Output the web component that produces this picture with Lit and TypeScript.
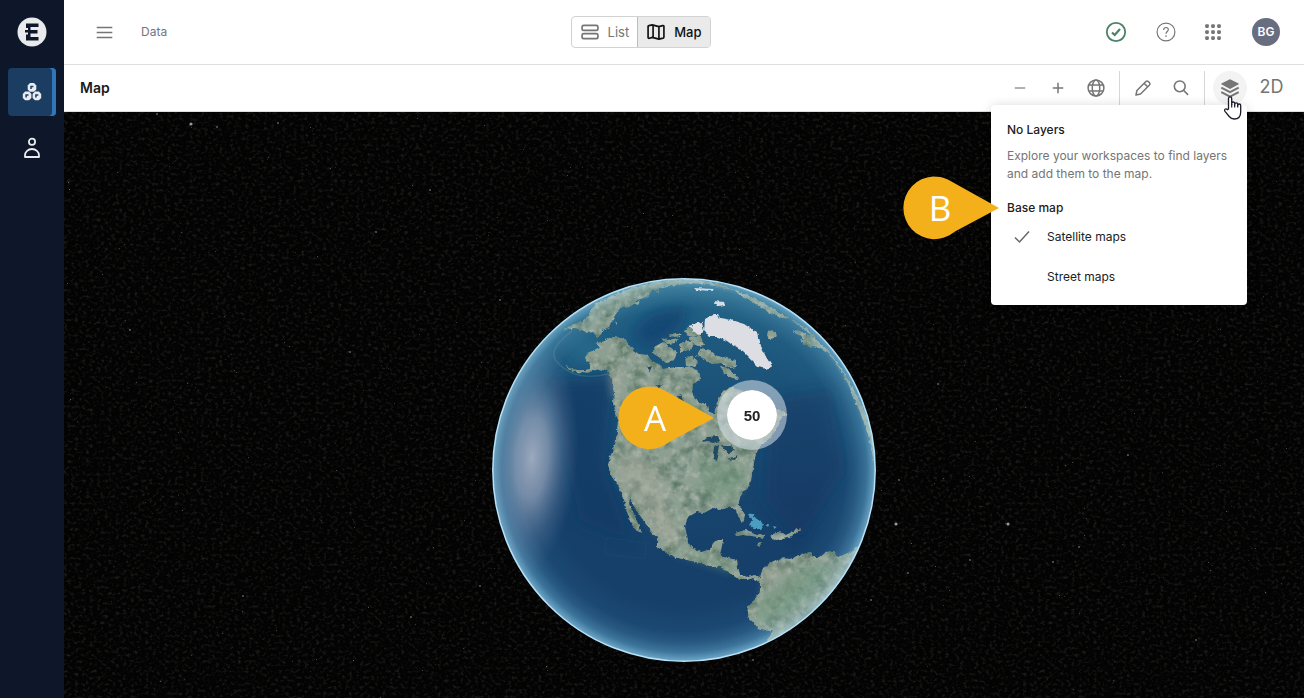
import { LitElement, html, svg, css } from "lit";
import { customElement, state } from "lit/decorators.js";

const LAND = [
  // Siberia, following the northern limb
  "M594 305Q638 279 690 279L690 283L677 285L666 286L653 290L648 296L637 300L630 307L620 308L612 320L609 327L603 330L598 338L593 332L587 333L582 330L574 328L565 330L570 325L583 322L590 313Z",
  // Kamchatka to Europe along the rim
  "M690 279Q730 284 765 304Q800 323 828 350L848 378L864 410Q876 440 874 462L868 435L860 412L850 388L843 374L834 360L828 352L818 347L808 345L803 337L795 333L792 330L800 331L806 335L814 336L806 328L790 319L782 318L768 312L757 304L742 297L734 290L710 285L690 283Z",
  // North and Central America
  "M587 353L592 351L600 347L597 343L605 341L609 338L613 337L625 338L628 344L633 350L639 354L647 355L652 361L657 363L663 369L677 367L690 367L697 370L702 377L697 382L693 385L692 393L695 399L700 402L708 405L710 413L714 414L717 403L722 392L730 387L737 389L747 393L756 397L767 407L780 410L788 415L780 419L780 423L770 438L760 446L757 452L754 462L753 470L752 474L750 485L744 491L740 497L738 505L742 509L745 515L743 523L738 516L737 510L730 507L720 510L713 508L704 513L697 512L690 516L687 520L685 527L687 535L688 542L692 548L700 552L710 550L712 543L718 540L723 540L722 546L720 555L728 558L737 560L738 568L740 574L747 577L755 575L760 577L760 582L752 578L747 580L740 580L732 575L726 570L720 567L710 566L700 563L687 560L677 558L668 554L657 547L657 538L650 530L643 520L637 511L630 498L629 504L634 514L642 533L635 529L630 520L627 512L624 500L618 485L612 477L608 465L610 457L615 445L617 432L618 420L613 403L614 392L612 380L609 372L600 369L587 373L580 371L590 369L590 365L585 358Z",
  // South America, cut by the eastern limb
  "M760 577L763 568L772 562L780 558L790 559L797 556L810 552L813 557L820 557L826 552L833 551L838 557L850 552L861 545Q848 578 829 599Q800 632 757 649L768 640L773 630L765 631L758 628L753 622L747 617L748 607L754 601L760 590Z",
  // Arctic islands
  "M656 346L663 342L670 347L677 352L674 361L666 363L660 358L653 353ZM661 338L668 340L678 338L676 343L666 344ZM679 344L687 340L694 345L689 351L681 352ZM684 331L692 326L700 328L700 336L692 337L686 335ZM690 337L701 337L704 345L698 346L691 343ZM701 348L710 350L717 356L727 358L736 361L736 367L730 368L721 363L712 364L703 358L696 356ZM685 357L693 356L698 363L694 367L686 365ZM720 366L727 368L735 375L739 379L732 378L724 372ZM669 335L676 333L681 336L674 337Z",
  // Iceland, British Isles, Caribbean islands, Aleutians
  "M768 331L774 330L777 334L776 338L769 339L767 335ZM800 339L806 340L812 347L804 345ZM735 533L746 530L757 534L766 535L763 538L752 536L743 535L736 536ZM770 536L777 532L788 534L797 529L798 531L788 538L776 540ZM794 532L801 529L796 534ZM757 544L763 543L760 546Z",
  "M655 291L660 290L658 293ZM566 366Q574 371 586 370L586 372Q574 374 566 367ZM634 303L640 301L638 305ZM615 323L617 322L617 325Z",
];

const ICE = [
  "M705 319L714 314L718 314L720 318L731 320L744 324L750 328L758 333L761 346L766 357L772 366L766 369L758 367L750 359L742 351L735 347L727 341L718 337L709 337L704 331Z",
  "M714 301L724 302L725 305L718 306ZM694 288L714 289L712 291L696 290ZM693 324L702 322L704 330L698 336L692 330ZM688 326L692 325L693 330Z",
];

const LAKES =
  "M701 443L708 437L718 436L720 441L713 443L708 442ZM714 446L719 444L718 452L716 461L713 458ZM722 446L730 446L735 450L728 454ZM727 459L738 455L735 460ZM646 368L652 366L650 371ZM655 386L662 384L659 387ZM677 396L681 394L684 402L680 403Z";

const GREEN =
  "M754 612L765 592L785 580L805 566L835 562L812 595L790 612L765 625ZM700 455L730 465L748 470L738 495L715 500L700 490ZM668 553L700 556L735 565L730 572L690 558ZM640 395L690 400L705 415L690 430L650 420L625 405Z";
const DRY =
  "M615 455L640 455L665 475L665 505L680 535L672 545L655 530L640 505L622 485ZM765 573L795 560L780 578L762 592ZM608 370L618 372L620 395L613 400Z";

const BRIGHT_STARS = [
  [896, 524, 2], [908, 573, 1], [1079, 547, 1], [191, 124, 2], [217, 127, 1], [157, 114, 1],
  [278, 123, 1], [430, 190, 1], [376, 232, 1], [500, 300, 1], [938, 384, 1], [1053, 562, 1],
  [1008, 524, 2], [243, 596, 1], [480, 586, 1], [1128, 455, 1], [871, 600, 1], [753, 660, 1],
  [350, 352, 1], [970, 560, 1], [899, 480, 1], [411, 617, 1], [130, 330, 1], [1196, 640, 1],
];

function scatter(count: number) {
  let seed = 20731;
  const next = () => (seed = (seed * 16807) % 2147483647) / 2147483647;
  return Array.from({ length: count }, () => ({
    x: Math.floor(next() * 1920),
    y: Math.floor(next() * 1080),
    o: 0.12 + next() * next() * 0.4,
  }));
}
const FAINT_STARS = scatter(1100);

const icon = (size: number, body: unknown, width = 1.5) => html`<svg
  class="icon" width=${size} height=${size} viewBox="0 0 24 24" fill="none"
  stroke="currentColor" stroke-width=${width} aria-hidden="true">${body}</svg>`;

const hexNode = (x: number, y: number) => svg`
  <path d="M${x - 2} ${y - 4.3}h4l2.300 2.300v4l-2.300 2.300h-4l-2.300-2.300v-4z" fill="currentColor" stroke="none"/>
  <path d="M${x - 1} ${y + 1.6}V${y - 0.8}H${x + 1.4}" stroke="#1b3d62" stroke-width="1.5"/>`;

@customElement("map-pin")
export class MapPin extends LitElement {
  static properties = { label: { type: String } };
  declare label: string;
  static styles = css`
    :host { display: block; width: 98px; height: 64px; }
    svg { display: block; }
    text { font: 35px "Open Sans", sans-serif; fill: #fff; text-anchor: middle; }
  `;
  render() {
    return html`<svg width="98" height="64" viewBox="0 0 98 64">
      <path fill="#f4b01b" d="M32 .5C43 .5 48 4 54 7.500L98 32L54 55.500C48 59.500 43 63.200 32 63.200A31.400 31.400 0 0 1 32 .5Z"/>
      <text x="39" y="45">${this.label}</text>
    </svg>`;
  }
}

@customElement("earth-globe")
export class EarthGlobe extends LitElement {
  static styles = css`
    :host { display: block; position: relative; width: 384px; height: 384px; }
    svg { display: block; overflow: visible; }
    .cluster {
      position: absolute; left: 225px; top: 102px; width: 70px; height: 70px; padding: 0;
      border: 10px solid rgba(218, 228, 235, .55); border-radius: 50%; background: #fff;
      background-clip: padding-box; color: #222; font: 700 15px "Liberation Sans", sans-serif; cursor: pointer;
    }
    map-pin { position: absolute; left: 124px; top: 108px; }
  `;
  render() {
    return html`<svg width="384" height="384" viewBox="492 278 384 384" role="img" aria-label="Globe">
      <defs>
        <clipPath id="disc"><circle cx="684" cy="470" r="191"/></clipPath>
        <radialGradient id="sea" gradientUnits="userSpaceOnUse" cx="684" cy="470" r="192">
          <stop offset="0" stop-color="#17446e"/><stop offset=".7" stop-color="#163f69"/>
          <stop offset=".9" stop-color="#1d4d77"/><stop offset="1" stop-color="#34759f"/>
        </radialGradient>
        <linearGradient id="north" x1="0" y1="0" x2="0" y2="1">
          <stop offset="0" stop-color="#28708f" stop-opacity=".75"/>
          <stop offset=".4" stop-color="#1d5c82" stop-opacity=".45"/>
          <stop offset=".75" stop-color="#123e66" stop-opacity="0"/>
        </linearGradient>
        <radialGradient id="haze" gradientUnits="userSpaceOnUse" cx="684" cy="470" r="192">
          <stop offset=".84" stop-color="#9fd4ea" stop-opacity="0"/>
          <stop offset=".95" stop-color="#9fd4ea" stop-opacity=".17"/>
          <stop offset="1" stop-color="#b7e3f6" stop-opacity=".5"/>
        </radialGradient>
        <radialGradient id="glint">
          <stop offset="0" stop-color="#a9b3c5" stop-opacity=".9"/>
          <stop offset=".35" stop-color="#9aa6bc" stop-opacity=".7"/>
          <stop offset=".7" stop-color="#7488a8" stop-opacity=".3"/>
          <stop offset="1" stop-color="#5f7ba0" stop-opacity="0"/>
        </radialGradient>
        <filter id="terrain" x="492" y="278" width="384" height="384" filterUnits="userSpaceOnUse" color-interpolation-filters="sRGB">
          <feTurbulence type="fractalNoise" baseFrequency=".22" numOctaves="3" seed="4" result="edge"/>
          <feDisplacementMap in="SourceGraphic" in2="edge" scale="4" xChannelSelector="R" yChannelSelector="G" result="coast"/>
          <feTurbulence type="fractalNoise" baseFrequency=".07" numOctaves="5" seed="9"/>
          <feColorMatrix values="0 0 0 0 .3  0 0 0 0 .42  0 0 0 0 .36  2 0 0 0 -.850" result="dark"/>
          <feComposite in="dark" in2="coast" operator="in" result="shade"/>
          <feTurbulence type="fractalNoise" baseFrequency=".14" numOctaves="4" seed="21"/>
          <feColorMatrix values="0 0 0 0 .74  0 0 0 0 .76  0 0 0 0 .7  0 1.600 0 0 -.750"/>
          <feComposite in2="coast" operator="in" result="light"/>
          <feMerge><feMergeNode in="coast"/><feMergeNode in="shade"/><feMergeNode in="light"/></feMerge>
        </filter>
        <filter id="ragged" x="-10%" y="-10%" width="120%" height="120%">
          <feTurbulence type="fractalNoise" baseFrequency=".2" numOctaves="2" seed="3"/>
          <feDisplacementMap in="SourceGraphic" scale="4" xChannelSelector="R" yChannelSelector="G"/>
        </filter>
        <filter id="soft" x="-30%" y="-30%" width="160%" height="160%"><feGaussianBlur stdDeviation="7"/></filter>
        <filter id="blend" x="-10%" y="-10%" width="120%" height="120%"><feGaussianBlur stdDeviation="4"/></filter>
      </defs>
      <circle cx="684" cy="470" r="191" fill="url(#sea)"/>
      <g clip-path="url(#disc)">
        <rect x="492" y="278" width="384" height="384" fill="url(#north)"/>
        <g filter="url(#soft)">
          <path d="M632 335Q645 305 690 308L680 330L650 348Z" fill="#0d426f" opacity=".8"/>
          <path d="M770 400L830 390L845 470L800 540L765 500Z" fill="#143460" opacity=".45"/>
          <path d="M550 380L612 378L604 470L630 540L580 520Z" fill="#143763" opacity=".7"/>
          <path d="M570 335L590 333L610 350L590 365Q572 362 568 350Z" fill="#246a8c" opacity=".8"/>
        </g>
        <path d="M572 331Q546 350 557 362Q575 382 608 374" fill="none" stroke="#82a3a8" stroke-opacity=".22" stroke-width="1.500"/>
        <ellipse cx="532" cy="458" rx="46" ry="116" transform="rotate(4 532 458)" fill="url(#glint)"/>
        <g filter="url(#terrain)">
          <g fill="#8c9f92">${LAND.map((d) => svg`<path d=${d}/>`)}</g>
        </g>
        <g filter="url(#blend)">
          <path d=${GREEN} fill="#6d9379" opacity=".5"/>
          <path d=${DRY} fill="#aeada0" opacity=".45"/>
        </g>
        <path d=${LAKES} fill="#234b63" filter="url(#ragged)"/>
        <g filter="url(#ragged)" fill="#dcdee4">${ICE.map((d) => svg`<path d=${d}/>`)}</g>
        <path d="M748 514L755 513L753 517L757 519L764 524L761 529L754 529L749 525L752 520ZM766 525L769 525L768 527ZM773 526L777 527L774 529Z" fill="#55aece" opacity=".85" filter="url(#ragged)"/>
        <path d="M606 538L646 543L645 559L605 554Z" fill="none" stroke="#365f73" stroke-opacity=".2"/>
        <circle cx="684" cy="470" r="192" fill="url(#haze)"/>
      </g>
      <circle cx="684" cy="470" r="191.200" fill="none" stroke="#b5e2fa" stroke-width="1.500"/>
    </svg>
    <button class="cluster" aria-label="50 items">50</button>
    <map-pin label="A"></map-pin>`;
  }
}

@customElement("app-root")
export class AppRoot extends LitElement {
  @state() private baseMap = "satellite";

  static styles = css`
    :host {
      display: grid; grid-template-columns: 64px minmax(0, 1fr); min-height: 100vh;
      font: 12px/18px Inter, sans-serif; color: #212121; background: #fff;
    }
    * { box-sizing: border-box; }
    svg { display: block; flex: none; }
    h1, h2, p { margin: 0; }
    button { font: inherit; color: inherit; border: 0; background: none; padding: 0; cursor: pointer; }
    a { text-decoration: none; color: inherit; }

    .rail { background: #0e172a; display: flex; flex-direction: column; align-items: center; gap: 8px; padding: 16px 8px; color: #e9ebee; }
    .logo { height: 32px; display: grid; place-items: center; margin-bottom: 12px; }
    .rail-item { width: 48px; height: 48px; display: grid; place-items: center; border-radius: 4px; }
    .rail-item.active { background: #1b3d62; box-shadow: inset -4px 0 #2f77ba; }

    .main { display: flex; flex-direction: column; min-width: 0; }
    .topbar { display: grid; grid-template-columns: 5fr auto 6fr; align-items: center; height: 65px; border-bottom: 1px solid #dedede; padding: 0 24px 0 32px; }
    .crumbs { display: flex; align-items: center; gap: 28px; color: #757575; }
    .crumbs a { color: #6f7683; }
    .views { display: flex; height: 32px; border: 1px solid #d2d2d2; border-radius: 4px; overflow: hidden; font-size: 13px; color: #757575; }
    .view { display: flex; align-items: center; gap: 8px; padding: 0 8px; }
    .view.active { background: #eaeaea; color: #111; font-weight: 500; border-left: 1px solid #bdbdbd; }
    .account { display: flex; align-items: center; justify-content: flex-end; gap: 28px; color: #757575; }
    .ok { color: #4c8067; }
    .avatar { width: 28px; height: 28px; margin-left: 2px; border-radius: 50%; background: #696d80; color: #fff; font-weight: 600; }

    .toolbar { display: flex; align-items: center; height: 47px; border-bottom: 1px solid #dedede; padding: 0 8px 0 16px; position: relative; z-index: 1; color: #757575; }
    .toolbar h1 { flex: 1; font-size: 14px; line-height: 20px; font-weight: 600; color: #1b1b1b; }
    .tools { display: flex; align-items: center; }
    .tool { width: 38px; height: 34px; display: grid; place-items: center; }
    .group { display: flex; padding: 0 4px; border-right: 1px solid #d6d6d6; }
    .layers { position: relative; margin-left: 8px; }
    .layers .tool { width: 34px; border-radius: 50%; background: #f3f3f3; }
    .mode { width: 49px; height: 34px; font-size: 18px; padding-bottom: 2px; color: #757575; }
    .cursor { position: absolute; left: 10px; top: 24px; z-index: 3; pointer-events: none; }

    .menu { position: absolute; top: 100%; right: 0; width: 256px; padding: 16px 16px 8px; background: #fff; border-radius: 4px; box-shadow: 0 1px 12px rgba(0, 0, 0, .16); color: #212121; }
    .menu h2 { font-size: 12px; line-height: 18px; font-weight: 500; }
    .menu p { margin: 8px 0 16px; color: #757575; }
    .base { position: relative; }
    .base map-pin { position: absolute; right: 232px; top: -23px; }
    .option { display: flex; align-items: center; width: 100%; height: 40px; gap: 16px; padding: 0 3px; cursor: pointer; }
    .option input { appearance: none; position: absolute; margin: 0; }
    .tick { width: 21px; height: 24px; display: grid; place-items: center; color: #666; }

    .stage { position: relative; flex: 1; background: #030303; overflow: hidden; display: grid; justify-items: center; align-items: center; padding: 166px 0 36px; }
    .sky { position: absolute; inset: 0; width: 100%; height: 100%; }
  `;

  private option(id: string, text: string) {
    const on = this.baseMap === id;
    return html`<label class="option">
      <input type="radio" name="base" value=${id} .checked=${on} @change=${() => (this.baseMap = id)} />
      <span class="tick">${on ? icon(24, svg`<path d="M5 12.500l4.500 4.500L19 6.500"/>`, 1.5) : ""}</span>
      <span>${text}</span>
    </label>`;
  }

  render() {
    return html`
      <nav class="rail" aria-label="Main">
        <a class="logo" href="#" aria-label="Home">
          <svg width="30" height="30" viewBox="0 0 30 30"><circle cx="15" cy="15" r="14.500" fill="#e8eaeb"/>
            <path fill="#0e172a" d="M9 6.500h12.500v3.500h-8v3h7v3.500h-7v3.500h8v3.500H9v-6H11v-2H8v-2.500h3v-2H9z"/></svg>
        </a>
        <a class="rail-item active" href="#data" aria-label="Data">${icon(24, [hexNode(12, 7.4), hexNode(7.1, 15.9), hexNode(16.9, 15.9)])}</a>
        <a class="rail-item" href="#people" aria-label="People">${icon(24, svg`<circle cx="12" cy="5.800" r="3.100"/><path d="M5 21v-1.500a7 6.500 0 0 1 14 0V21z" stroke-linejoin="round"/>`, 1.8)}</a>
      </nav>
      <div class="main">
        <header class="topbar">
          <div class="crumbs">
            <button aria-label="Menu">${icon(17, svg`<path d="M1 5h22M1 12h22M1 19h22"/>`, 2.2)}</button>
            <a href="#data">Data</a>
          </div>
          <div class="views">
            <button class="view">${icon(20, svg`<rect x="2.500" y="4" width="19" height="6" rx="2"/><rect x="2.500" y="14" width="19" height="6" rx="2"/>`, 2)}List</button>
            <button class="view active">${icon(20, svg`<path d="M2.500 5.500q0-1 1-1.200l4-.8 8 2 4.500-1.200q1.500-.3 1.500 1V18q0 1-1 1.300l-5 1.200-8-2-3.500 1q-1.500.3-1.500-1zM8.500 3.700v14.800M15.500 5.500v14.800" stroke-linejoin="round"/>`, 2)}Map</button>
          </div>
          <div class="account">
            <button class="ok" aria-label="Status">${icon(24, svg`<circle cx="12" cy="12" r="9.200" stroke-width="1.800"/><path d="M8 12.500l2.700 2.500 5.300-6" stroke-width="2.200"/>`)}</button>
            <button aria-label="Help">${icon(20, svg`<circle cx="12" cy="12" r="10.700"/><path d="M9.200 9.500c0-4 5.600-3.600 5.600-.4 0 2.400-2.800 2.300-2.800 5M12 16v2"/>`, 1.4)}</button>
            <button aria-label="Apps">${icon(18, svg`${[1, 9, 17].map((y) => [1, 9, 17].map((x) => svg`<rect x=${x + 0.5} y=${y + 0.5} width="5" height="5" rx="1.500" fill="currentColor" stroke="none"/>`))}`)}</button>
            <button class="avatar" aria-label="Account">BG</button>
          </div>
        </header>
        <div class="toolbar">
          <h1>Map</h1>
          <div class="tools">
            <div class="group">
              <button class="tool" aria-label="Zoom out">${icon(18, svg`<path d="M5 12h14"/>`, 1.5)}</button>
              <button class="tool" aria-label="Zoom in">${icon(18, svg`<path d="M5 12h14M12 5v14"/>`, 2)}</button>
              <button class="tool" aria-label="World">${icon(20, svg`<circle cx="12" cy="12" r="9.500"/><ellipse cx="12" cy="12" rx="4.500" ry="9.500"/><path d="M3.500 8.500h17M3.500 15.500h17"/>`, 1.8)}</button>
            </div>
            <div class="group">
              <button class="tool" aria-label="Draw">${icon(20, svg`<path d="M3.500 20.500l1.200-5.500L15.500 4.200q1.400-1.200 2.800 0l1.500 1.500q1.200 1.400 0 2.800L9 19.300zM13.500 6.500l4 4" stroke-linejoin="round"/>`, 1.8)}</button>
              <button class="tool" aria-label="Search">${icon(20, svg`<circle cx="10.500" cy="10" r="6.500"/><path d="M15.300 15l5.200 5.200"/>`, 1.9)}</button>
            </div>
            <div class="layers">
              <button class="tool" aria-label="Layers" aria-expanded="true">${icon(22, svg`<path d="M12 2.500l9.500 4.500v1L12 13 2.500 8V7z" fill="currentColor" stroke="none"/><path d="M2.500 11.500l9.500 5 9.500-5M2.500 16.500l9.500 5 9.500-5"/>`, 2.2)}</button>
              <div class="menu">
                <h2>No Layers</h2>
                <p>Explore your workspaces to find layers and add them to the map.</p>
                <div class="base">
                  <h2 id="base-title">Base map</h2>
                  <map-pin label="B"></map-pin>
                </div>
                <div role="radiogroup" aria-labelledby="base-title">
                  ${this.option("satellite", "Satellite maps")} ${this.option("street", "Street maps")}
                </div>
              </div>
              <svg class="cursor" width="20" height="26" viewBox="0 0 20 26" aria-hidden="true">
                <path d="M5.500 14V3.500a1.600 1.600 0 0 1 3.200 0V9.500V8.500a1.500 1.500 0 0 1 3 0V10V9.300a1.500 1.500 0 0 1 3 0V11V10.500a1.500 1.500 0 0 1 3 0V17q0 7-6.500 7-3 0-5-2.500L2 16.300q-1-1.500.3-2.300 1.200-.6 2.200.7z" fill="#fff" stroke="#1b1b2b" stroke-width="1.300" stroke-linejoin="round"/>
                <path d="M8.700 9v3.500M11.700 9.500v3M14.700 10.500v2" stroke="#1b1b2b" stroke-width="1.200"/>
              </svg>
            </div>
            <button class="mode">2D</button>
          </div>
        </div>
        <main class="stage">
          <svg class="sky" aria-hidden="true">
            <filter id="dust" x="0" y="0" width="100%" height="100%" color-interpolation-filters="sRGB">
              <feTurbulence type="fractalNoise" baseFrequency=".27 .31" numOctaves="4" seed="7"/>
              <feColorMatrix values=".3 0 0 0 .22  .3 0 0 0 .2  .3 0 0 0 .17  0 0 3 0 -1.500"/>
            </filter>
            <rect width="100%" height="100%" filter="url(#dust)" opacity=".27"/>
            ${FAINT_STARS.map((s) => svg`<rect x=${s.x} y=${s.y} width="1" height="1" fill="#cfcfcf" opacity=${s.o}/>`)}
            ${BRIGHT_STARS.map(([x, y, r]) => svg`<circle cx=${x - 64} cy=${y - 112} r=${r * 0.8} fill="#c9c9d2" opacity=".75"/>`)}
          </svg>
          <earth-globe></earth-globe>
        </main>
      </div>
    `;
  }
}
